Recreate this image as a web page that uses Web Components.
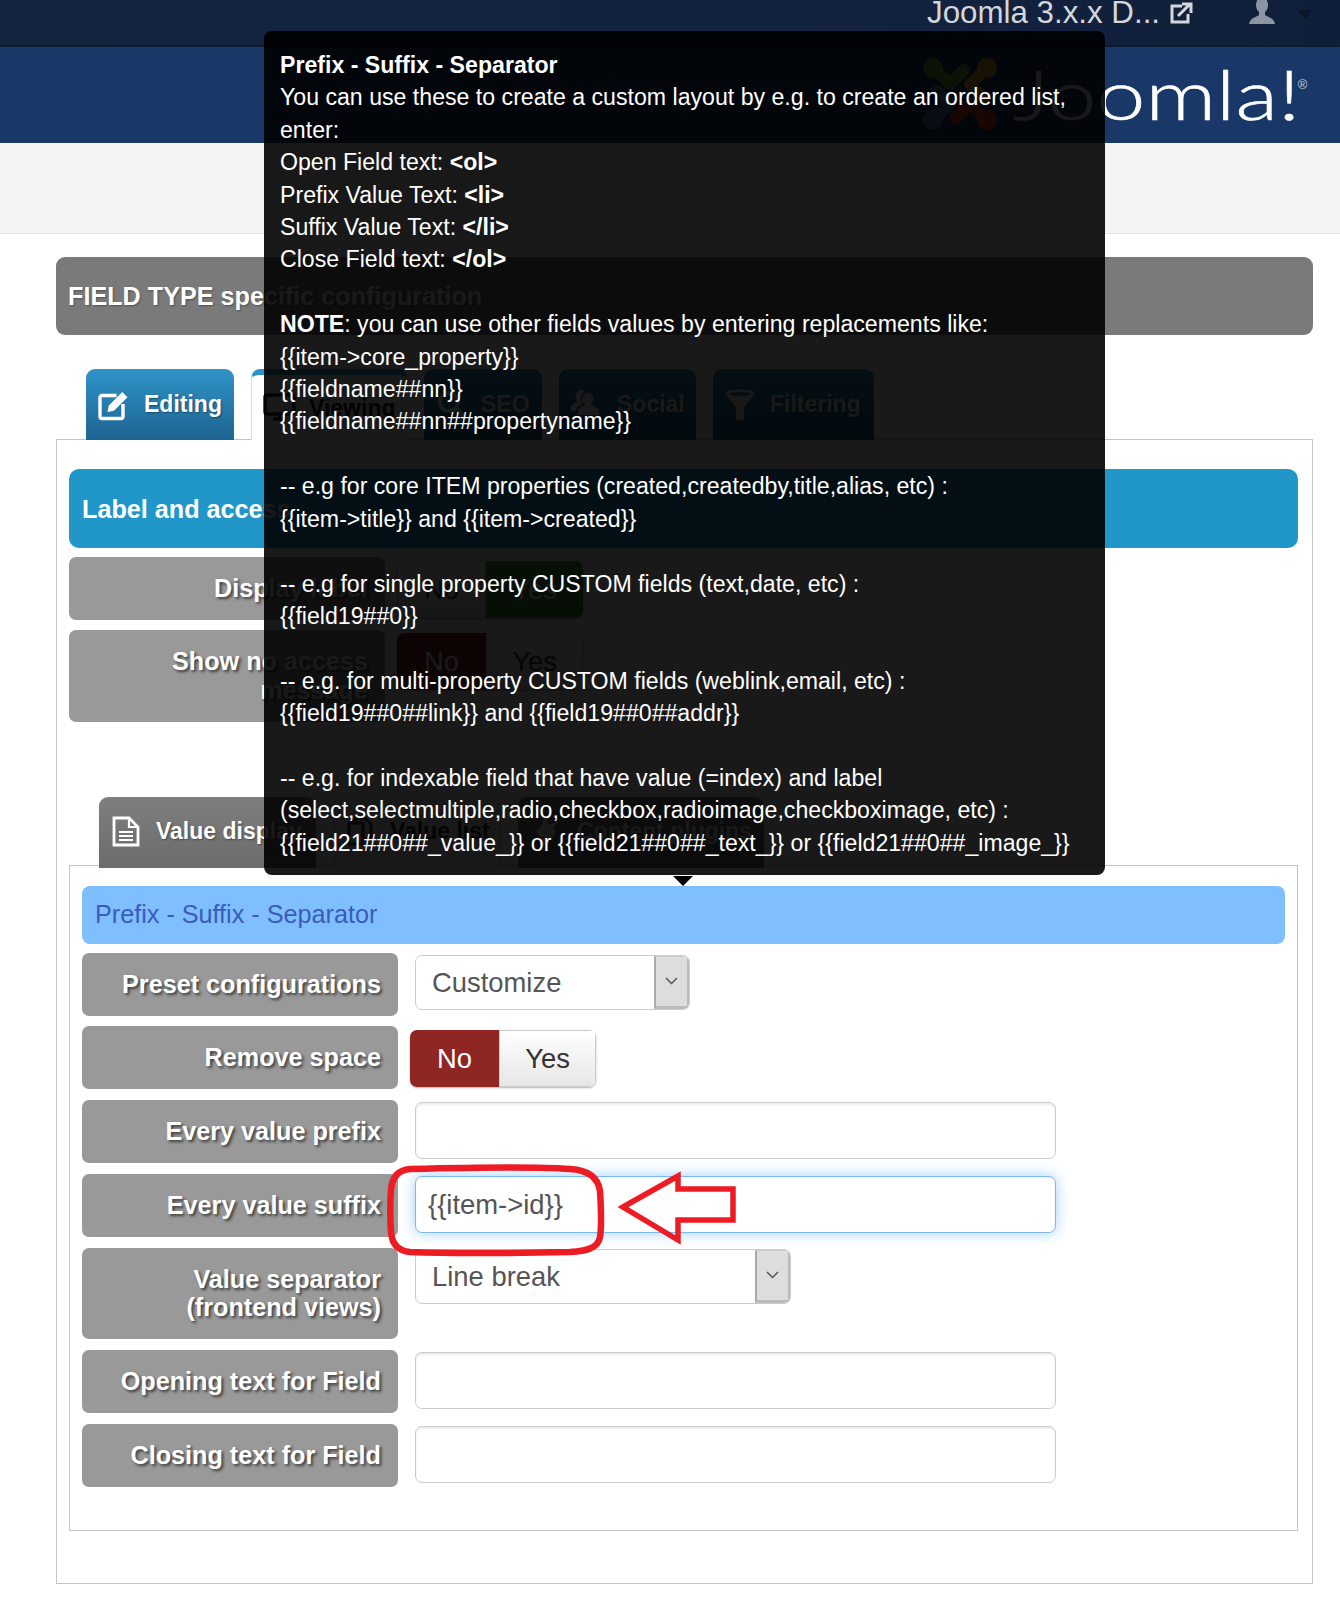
<!DOCTYPE html>
<html lang="en">
<head>
<meta charset="utf-8">
<title>Field configuration</title>
<style>
html,body{margin:0;padding:0;background:#fff}
body{position:relative;height:1600px;overflow:hidden;font-family:"Liberation Sans",Arial,sans-serif}
</style>
</head>
<body>
<top-bar></top-bar>
<brand-bar></brand-bar>
<sub-bar></sub-bar>
<page-main>
  <section-bar kind="gray">FIELD TYPE specific configuration</section-bar>
  <tab-strip style="--top:34px;--pad:30px">
    <tab-btn kind="blue" style="--w:148px;--ic:10px;--gap:15px">
      <svg slot="icon" width="33" height="32" viewBox="0 0 32 32"><path d="M20 6.500H5.500a2 2 0 0 0-2 2v19a2 2 0 0 0 2 2h19a2 2 0 0 0 2-2V15" fill="none" stroke="#fff" stroke-width="3.400"/><path d="M11 23l1.300-6.500L25.800 3l5.200 5.200L17.500 21.700z" fill="#fff"/></svg>
      Editing</tab-btn>
    <tab-btn kind="white" style="--w:156px;--ic:11px;--gap:13px">
      <svg slot="icon" width="33" height="28" viewBox="0 0 33 28"><rect x="2" y="2" width="29" height="19" rx="2" fill="none" stroke="#222" stroke-width="3.500"/><path d="M10 26h13M16.500 21v5" stroke="#222" stroke-width="3.500"/></svg>
      Viewing</tab-btn>
    <tab-btn kind="blue" style="--w:118px;--ic:12px;--gap:15px">
      <svg slot="icon" width="30" height="30" viewBox="0 0 30 30"><circle cx="13" cy="13" r="9" fill="none" stroke="#fff" stroke-width="4"/><path d="M20 20l8 8" stroke="#fff" stroke-width="5"/></svg>
      SEO</tab-btn>
    <tab-btn kind="blue" style="--w:137px;--ic:11px;--gap:17px">
      <svg slot="icon" width="30" height="27" viewBox="0 0 30 27"><path d="M18 4a5.500 6 0 0 1 5.500 6c0 3-1.500 5-2.500 6 3 1.500 8 2.500 8 6.500V26H8v-3.500c0-4 5-5 8-6.500-1-1-3.500-3-3.500-6A5.500 6 0 0 1 18 4z" fill="#fff"/><path d="M11 1a5 6 0 0 1 4 2c-2 1-4 3.500-4 6.500 0 2 1 4 2 5.500-3 1.500-7 3-7 7H1v-4c0-3 4-4 6.500-5.500C6.500 11.500 5.500 9.500 5.500 7A5.500 6 0 0 1 11 1z" fill="#fff"/></svg>
      Social</tab-btn>
    <tab-btn kind="blue" style="--w:161px;--ic:12px;--gap:15px">
      <svg slot="icon" width="30" height="31" viewBox="0 0 30 31"><ellipse cx="15" cy="5" rx="13.500" ry="3.500" fill="none" stroke="#fff" stroke-width="2.500"/><path d="M1 6l10 12v11a2 2 0 0 0 2 2h4a2 2 0 0 0 2-2V18L29 6c-3 3-25 3-28 0z" fill="#fff"/></svg>
      Filtering</tab-btn>
  </tab-strip>
  <tab-panel style="--pl:12px;--pr:14px;--pt:29px;--h:1145px;--mt:-1px">
    <section-bar kind="blue">Label and access</section-bar>
    <form-rows style="--gap:10px;--mt:9px">
      <form-row style="--lw:316px;--cl:12px;--ct:4px"><span slot="label">Display label</span><yes-no active="yes"></yes-no></form-row>
      <form-row style="--lw:316px;--cl:12px;--ct:3px"><span slot="label">Show no access<br>message</span><yes-no active="no"></yes-no></form-row>
    </form-rows>
    <tab-strip style="--top:75px;--pad:30px">
      <tab-btn kind="gray" style="--w:217px;--ic:13px;--gap:16px">
        <svg slot="icon" width="28" height="31" viewBox="0 0 28 31"><path d="M2 2h15l9 9v18H2z" fill="none" stroke="#fff" stroke-width="2.800"/><path d="M17 2v9h9" fill="none" stroke="#fff" stroke-width="2.200"/><path d="M7 16h14M7 20h14M7 24h14" stroke="#fff" stroke-width="2.200"/></svg>
        Value display</tab-btn>
      <tab-btn kind="light" style="--w:168px;--ic:12px;--gap:16px">
        <svg slot="icon" width="28" height="30" viewBox="0 0 28 30"><path d="M3 7h14v21H3zM9 7V2h10l6 6v15h-8" fill="none" stroke="#333" stroke-width="2.800"/></svg>
        Value list</tab-btn>
      <tab-btn kind="gray" style="--w:246px;--ic:16px;--gap:17px">
        <svg slot="icon" width="26" height="30" viewBox="0 0 26 30"><path d="M3 14l9-9 9 9c1 5-3 9-7 9l-4 6-4-3 3-5c-4-1-7-3-6-7z" fill="#fff"/><path d="M9 7l5-6M17 11l6-5" stroke="#fff" stroke-width="3"/></svg>
        Content plugins</tab-btn>
    </tab-strip>
    <tab-panel style="--pl:12px;--pr:12px;--pt:20px;--h:666px;--mt:-3px">
      <section-bar kind="sky">Prefix - Suffix - Separator</section-bar>
      <form-rows style="--gap:10.750px;--mt:9px">
        <form-row style="--ct:2px"><span slot="label">Preset configurations</span><select-box style="--w:275px">Customize</select-box></form-row>
        <form-row style="--cl:12px;--ct:4px"><span slot="label">Remove space</span><yes-no active="no"></yes-no></form-row>
        <form-row style="--ct:2px"><span slot="label">Every value prefix</span><text-box></text-box></form-row>
        <form-row style="--ct:2px"><span slot="label">Every value suffix</span><text-box focused>{{item-&gt;id}}</text-box></form-row>
        <form-row style="--ct:1px"><span slot="label">Value separator<br>(frontend views)</span><select-box style="--w:376px">Line break</select-box></form-row>
        <form-row style="--ct:2px"><span slot="label">Opening text for Field</span><text-box></text-box></form-row>
        <form-row style="--ct:2px"><span slot="label">Closing text for Field</span><text-box></text-box></form-row>
      </form-rows>
    </tab-panel>
  </tab-panel>
</page-main>
<red-callout></red-callout>
<help-tooltip>
  <b>Prefix - Suffix - Separator</b><br>
  You can use these to create a custom layout by e.g. to create an ordered list, enter:<br>
  Open Field text: <b>&lt;ol&gt;</b><br>
  Prefix Value Text: <b>&lt;li&gt;</b><br>
  Suffix Value Text: <b>&lt;/li&gt;</b><br>
  Close Field text: <b>&lt;/ol&gt;</b><br>
  <br>
  <b>NOTE</b>: you can use other fields values by entering replacements like:<br>
  {{item-&gt;core_property}}<br>
  {{fieldname##nn}}<br>
  {{fieldname##nn##propertyname}}<br>
  <br>
  -- e.g for core ITEM properties (created,createdby,title,alias, etc) :<br>
  {{item-&gt;title}} and {{item-&gt;created}}<br>
  <br>
  -- e.g for single property CUSTOM fields (text,date, etc) :<br>
  {{field19##0}}<br>
  <br>
  -- e.g. for multi-property CUSTOM fields (weblink,email, etc) :<br>
  {{field19##0##link}} and {{field19##0##addr}}<br>
  <br>
  -- e.g. for indexable field that have value (=index) and label<br>
  (select,selectmultiple,radio,checkbox,radioimage,checkboximage, etc) :<br>
  {{field21##0##_value_}} or {{field21##0##_text_}} or {{field21##0##_image_}}
</help-tooltip>
<script>
const def=(name,html)=>customElements.define(name,class extends HTMLElement{
  constructor(){super();this.attachShadow({mode:'open'}).innerHTML=html;}
});
const FONT='font-family:"Liberation Sans",Arial,sans-serif;';

def('top-bar',`<style>
:host{display:flex;align-items:flex-start;height:47px;box-sizing:border-box;background:linear-gradient(90deg,#13243f,#122341 60%,#101f39);border-bottom:2px solid #0e1b31;${FONT}overflow:hidden}
.t{margin-left:927px;font-size:31.300px;line-height:32px;margin-top:-3px;color:#d4d6da;white-space:nowrap}
.e{margin-left:10px;margin-top:2px}.u{margin-left:56px}.c{margin-left:22px;margin-top:10px}
</style><span class="t">Joomla 3.x.x D...</span>
<svg class="e" width="23" height="22" viewBox="0 0 23 22"><path d="M12 4H2v16h16v-8" fill="none" stroke="#d4d6da" stroke-width="3"/><path d="M8 14L19 3M12 2h9v9" fill="none" stroke="#d4d6da" stroke-width="3"/></svg>
<svg class="u" width="26" height="24" viewBox="0 0 26 24"><path d="M13-2c4 0 6 3 6 7 0 3-1 5-3 7v3c3 2 9 3 10 9H0c1-6 7-7 10-9v-3C8 10 7 8 7 5c0-4 2-7 6-7z" fill="#8c95a3"/></svg>
<svg class="c" width="16" height="9" viewBox="0 0 16 9"><path d="M0 0h16L8 9z" fill="#0a1528"/></svg>`);

def('brand-bar',`<style>
:host{display:block;height:96px;background:#1a3867;${FONT}overflow:hidden}
.logo{display:flex;align-items:flex-start;margin-left:920px;padding-top:7px}
svg{flex:none}
.w{font-family:Lato,"Open Sans",sans-serif;font-weight:300;font-size:68px;line-height:68px;color:#fff;margin:6px 0 0 13px;white-space:nowrap;transform:scaleX(1.29);transform-origin:left top;-webkit-text-stroke:.6px #fff}
.r{font-size:13px;color:#c8d0dc;margin:23px 0 0 62px}
</style><div class="logo"><svg width="80" height="80" viewBox="0 0 80 80" fill="none" stroke-width="12" stroke-linecap="round" stroke-linejoin="round">
<g stroke="#7ac143" ><path d="M13 14l17 16 14-14"/><circle cx="13" cy="14" r="4"/></g>
<g stroke="#f9a541"><path d="M67 14L50 30l14 14"/><circle cx="67" cy="14" r="4"/></g>
<g stroke="#f44321"><path d="M67 66L50 50 36 64"/><circle cx="67" cy="66" r="4"/></g>
<g stroke="#5091cd"><path d="M13 66l17-16-14-14"/><circle cx="13" cy="66" r="4"/></g></svg>
<span class="w">Joomla!</span><span class="r">®</span></div>`);

def('sub-bar',`<style>:host{display:block;height:91px;box-sizing:border-box;background:#f4f4f4;border-bottom:1px solid #e4e4e4}</style>`);

def('page-main',`<style>:host{display:block;padding:23px 27px 0 56px}</style><slot></slot>`);

def('section-bar',`<style>
:host{display:flex;align-items:center;${FONT}font-size:25.200px;box-sizing:border-box}
:host([kind=gray]){height:78px;background:#7a7a7a;border-radius:9px;padding-left:12px;color:#fff;font-weight:bold;text-shadow:1px 1px 2px rgba(0,0,0,.35)}
:host([kind=blue]){height:79px;background:#2096c9;border-radius:10px;padding-left:13px;padding-top:2px;color:#fff;font-weight:bold}
:host([kind=sky]){height:58px;background:#7fbeff;border-radius:8px;padding-left:13px;color:#3b5cb8}
</style><slot></slot>`);

def('tab-strip',`<style>:host{display:flex;gap:17px;margin-top:var(--top,0);padding-left:var(--pad,0);position:relative;z-index:1}</style><slot></slot>`);

def('tab-btn',`<style>
:host{display:flex;align-items:flex-start;width:var(--w);height:71px;box-sizing:border-box;padding-left:var(--ic);padding-top:21px;border-radius:9px 9px 0 0;${FONT}font-size:23px;font-weight:bold;line-height:28px;color:#fff;white-space:nowrap}
:host([kind=blue]){background:linear-gradient(#2f94c9,#1d6491);text-shadow:1px 1px 2px rgba(0,0,0,.4)}
:host([kind=gray]){background:linear-gradient(#7f7f7f,#6b6b6b);text-shadow:1px 1px 2px rgba(0,0,0,.4);padding-top:20px}
:host([kind=white]){background:#fff;color:#222;border-top:6px solid #2f94c9;border-left:1px solid #ddd;border-right:1px solid #ddd;padding-top:19px}
:host([kind=light]){background:#f2f2f2;color:#222;padding-top:20px;border-left:1px solid #ccc;border-right:1px solid #ccc}
.i{display:flex;margin-right:var(--gap);margin-top:-1px}
</style><span class="i"><slot name="icon"></slot></span><span><slot></slot></span>`);

def('tab-panel',`<style>:host{display:block;box-sizing:border-box;height:var(--h);border:1px solid #c4c4c4;padding:var(--pt) var(--pr) 0 var(--pl);margin-top:var(--mt);background:#fff}</style><slot></slot>`);

def('form-rows',`<style>:host{display:flex;flex-direction:column;gap:var(--gap);margin-top:var(--mt)}</style><slot></slot>`);

def('form-row',`<style>
:host{display:flex;align-items:flex-start}
.l{flex:none;box-sizing:border-box;width:var(--lw,316px);min-height:63px;padding:17px 17px 17px 8px;background:#999;border-radius:7px;${FONT}font-size:25.200px;font-weight:bold;line-height:28.800px;color:#fff;text-align:right;text-shadow:2px 2px 3px rgba(0,0,0,.6)}
.c{flex:1;min-width:0;margin-left:var(--cl,17px);margin-top:var(--ct,0)}
</style><div class="l"><slot name="label"></slot></div><div class="c"><slot></slot></div>`);

customElements.define('yes-no',class extends HTMLElement{
  constructor(){super();const a=this.getAttribute('active');
  this.attachShadow({mode:'open'}).innerHTML=`<style>
  :host{display:inline-flex;height:57px;${FONT}font-size:27.400px;border-radius:7px;overflow:hidden;box-shadow:0 1px 2px rgba(0,0,0,.3)}
  span{display:flex;align-items:center;justify-content:center;box-sizing:border-box}
  .n{width:89px}.y{width:97px}
  .off{background:linear-gradient(#fff,#e6e6e6);color:#333;border:1px solid #ccc}
  .no{background:#8e2623;color:#fff}.yes{background:#3f8a3f;color:#fff}
  </style><span class="n ${a==='no'?'no':'off'}">No</span><span class="y ${a==='yes'?'yes':'off'}">Yes</span>`;}
});

def('select-box',`<style>
:host{display:flex;width:var(--w);height:55px;box-sizing:border-box;border:1px solid #ccc;border-radius:7px;background:#fff;${FONT}font-size:27.400px;color:#555;overflow:hidden}
.v{flex:1;padding-left:16px;line-height:53px}
.b{flex:none;width:35px;box-sizing:border-box;background:#ddd;border-left:2px solid #aaa;border-right:2px solid #bbb;border-bottom:3px solid #bbb;border-top:1px solid #ccc;display:flex;align-items:flex-start;justify-content:center;padding-top:20px}
</style><span class="v"><slot></slot></span><span class="b"><svg width="13" height="8" viewBox="0 0 13 8"><path d="M1 1l5.500 5.500L12 1" fill="none" stroke="#555" stroke-width="1.500"/></svg></span>`);

def('text-box',`<style>
:host{display:block;width:641px;height:57px;box-sizing:border-box;border:1px solid #ccc;border-radius:7px;background:#fff;box-shadow:inset 0 2px 2px rgba(0,0,0,.08);${FONT}font-size:27.400px;line-height:55px;color:#555;padding-left:12px}
:host([focused]){border-color:#7db8ef;box-shadow:inset 0 1px 2px rgba(0,0,0,.07),0 0 14px rgba(82,168,236,.55)}
</style><slot></slot>`);

def('red-callout',`<style>:host{position:absolute;left:380px;top:1160px;width:370px;height:102px;z-index:5;pointer-events:none}svg{display:block}</style>
<svg width="370" height="102" viewBox="0 0 370 102" fill="none" stroke="#ed1c24" stroke-width="6.500" stroke-linejoin="miter">
<path d="M30 9C70 8 150 6 190 9c17 1 28 8 30 22 1 16 2 34 0 46-2 12-15 14-30 15-50 1-110 2-160 0-11-1-18-7-19-20-1-14-1-28 0-42C12 17 18 10 30 9z"/>
<path d="M243 47L298 16v13h55v31h-55v20z" stroke-width="5.500"/></svg>`);

def('help-tooltip',`<style>
:host{position:absolute;left:264px;top:31px;width:841px;box-sizing:border-box;padding:18px 16px 16px;background:rgba(0,0,0,.9);border-radius:8px;${FONT}font-size:23.130px;line-height:32.400px;color:#fff;z-index:10}
:host::after{content:"";position:absolute;left:409px;top:100%;margin-top:1px;border-style:solid;border-width:10px 10px 0;border-color:#000 transparent transparent}
</style><slot></slot>`);
</script>
</body>
</html>
